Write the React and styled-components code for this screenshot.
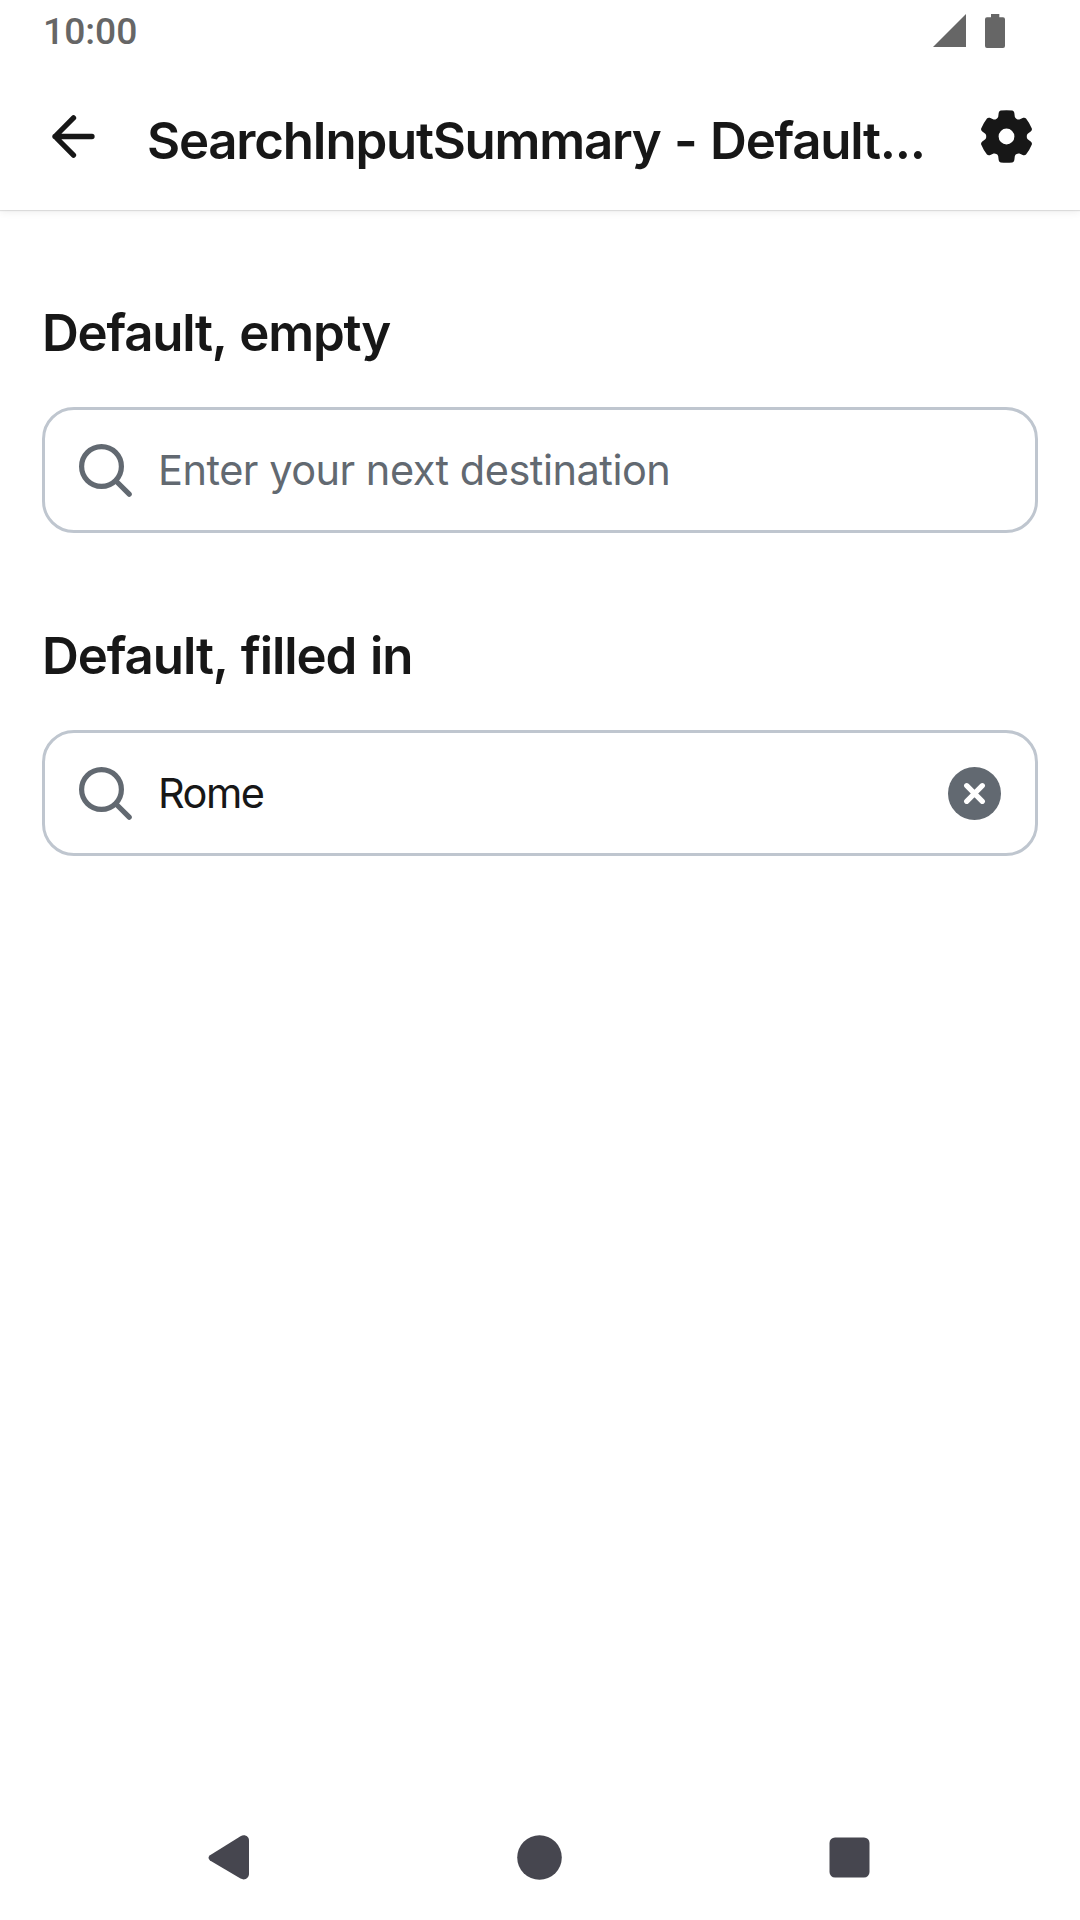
import React from "react";
import styled, { createGlobalStyle } from "styled-components";

const GlobalStyle = createGlobalStyle`
  *, *::before, *::after { box-sizing: border-box; }
  body { margin: 0; background: #fff; }
`;

const ink = "#171717";
const muted = "#626971";
const outline = "#bfc6cf";
const system = "#666666";
const navInk = "#46464f";

const Screen = styled.div`
  display: flex;
  flex-direction: column;
  width: 1080px;
  height: 1920px;
  background: #fff;
  color: ${ink};
  font-family: Inter, "Liberation Sans", sans-serif;
  svg { display: block; flex: none; }
`;

const TopBar = styled.header`
  flex: none;
  height: 210px;
  box-shadow: 0 1px 1px rgba(0, 0, 0, 0.1), 0 2px 8px rgba(0, 0, 0, 0.07);
`;

const StatusBar = styled.div`
  display: flex;
  align-items: center;
  justify-content: space-between;
  height: 61px;
  padding: 0 75px 0 43px;
`;

const Clock = styled.time`
  padding-top: 2px;
  font: 500 37.2px/59px Roboto, sans-serif;
  color: ${system};
`;

const StatusIcons = styled.div`
  display: flex;
  gap: 19px;
`;

const Toolbar = styled.div`
  display: flex;
  align-items: center;
  height: 149px;
  padding: 2px 47px 0 52px;
`;

const IconButton = styled.button`
  display: flex;
  border: 0;
  padding: 0;
  background: none;
  color: inherit;
`;

const Title = styled.h1`
  flex: 1;
  margin: 0 0 0 52px;
  padding-top: 8px;
  font-size: 51px;
  line-height: 64px;
  font-weight: 600;
  letter-spacing: ${(p) => p.$tracking}px;
  word-spacing: 2px;
  white-space: nowrap;
`;

const Content = styled.main`
  flex: 1;
  display: flex;
  flex-direction: column;
  gap: 90px;
  padding: 90px 42px 0;
`;

const Section = styled.section`
  display: flex;
  flex-direction: column;
  gap: 43px;
`;

const Heading = styled.h2`
  margin: 0;
  height: 64px;
  font-size: 51px;
  line-height: 66px;
  font-weight: 600;
  letter-spacing: ${(p) => p.$tracking}px;
  word-spacing: 2px;
  white-space: nowrap;
`;

const Field = styled.div`
  display: flex;
  align-items: center;
  height: 126px;
  padding: 0 34px;
  border: 3px solid ${outline};
  border-radius: 32px;
`;

const Value = styled.span`
  flex: 1;
  margin-left: 26px;
  font-size: 41.5px;
  font-weight: 400;
  line-height: 60px;
  letter-spacing: ${(p) => p.$tracking}px;
  color: ${(p) => (p.$placeholder ? muted : ink)};
  white-space: nowrap;
`;

const NavBar = styled.nav`
  display: flex;
  align-items: center;
  justify-content: space-between;
  height: 126px;
  padding: 0 210px 0 208px;
`;

const rotate = (x, y, deg) => {
  const a = (deg * Math.PI) / 180;
  const c = Math.cos(a);
  const s = Math.sin(a);
  return `${(x * c - y * s).toFixed(2)} ${(x * s + y * c).toFixed(2)}`;
};

// One gear tooth pointing up, repeated every 60 degrees.
const gearPath =
  [0, 60, 120, 180, 240, 300]
    .map((deg, i) => {
      const p = (x, y) => rotate(x, y, deg);
      return `${i ? "L" : "M"}${p(-10.15, -17.6)}Q${p(-8.7, -18.2)} ${p(-8.3, -19.7)}L${p(-7.8, -23.8)}Q${p(-7.4, -25.5)} ${p(-5.8, -25.9)}Q${p(0, -26.7)} ${p(5.8, -25.9)}Q${p(7.4, -25.5)} ${p(7.8, -23.8)}L${p(8.3, -19.7)}Q${p(8.7, -18.2)} ${p(10.15, -17.6)}`;
    })
    .join("") + "ZM-7.9 0A7.9 7.9 0 1 0 7.9 0A7.9 7.9 0 1 0 -7.9 0Z";

const GearIcon = () => (
  <svg width="53" height="53" viewBox="-26.5 -26.5 53 53">
    <path d={gearPath} fill={ink} fillRule="evenodd" />
  </svg>
);

const BackIcon = () => (
  <svg width="43" height="43" viewBox="0 0 43 43" fill="none" stroke={ink} strokeWidth="5.3" strokeLinecap="round" strokeLinejoin="round">
    <path d="M40 21.5H3M21.5 2.9L3 21.5L21.5 40.1" />
  </svg>
);

const SearchIcon = () => (
  <svg width="53" height="53" viewBox="0 0 53 53" fill="none" stroke={muted} strokeWidth="5.2">
    <circle cx="22.5" cy="22.5" r="19.9" />
    <path d="M37 37L50.2 50.2" strokeLinecap="round" />
  </svg>
);

const ClearIcon = () => (
  <svg width="53" height="53" viewBox="0 0 53 53">
    <circle cx="26.5" cy="26.5" r="26.5" fill={muted} />
    <path d="M18.7 18.7L34.3 34.3M34.3 18.7L18.7 34.3" stroke="#fff" strokeWidth="5.3" strokeLinecap="round" />
  </svg>
);

const SearchField = ({ value, placeholder, tracking }) => (
  <Field>
    <SearchIcon />
    <Value $placeholder={!value} $tracking={tracking}>{value || placeholder}</Value>
    {value && (
      <IconButton aria-label="Clear">
        <ClearIcon />
      </IconButton>
    )}
  </Field>
);

export default function App() {
  return (
    <Screen>
      <GlobalStyle />
      <TopBar>
        <StatusBar>
          <Clock>10:00</Clock>
          <StatusIcons>
            <svg width="33" height="34" viewBox="0 0 33 34" fill={system}>
              <path d="M33 0V33H0Z" />
            </svg>
            <svg width="20" height="34" viewBox="0 0 20 34" fill={system}>
              <path d="M6 0H14.3V3.3H18Q20 3.3 20 5.3V32Q20 34 18 34H2Q0 34 0 32V5.3Q0 3.3 2 3.3H6Z" />
            </svg>
          </StatusIcons>
        </StatusBar>
        <Toolbar>
          <IconButton aria-label="Back">
            <BackIcon />
          </IconButton>
          <Title $tracking={-1.26}>SearchInputSummary - Default...</Title>
          <IconButton aria-label="Settings">
            <GearIcon />
          </IconButton>
        </Toolbar>
      </TopBar>
      <Content>
        <Section>
          <Heading $tracking={-1.25}>Default, empty</Heading>
          <SearchField placeholder="Enter your next destination" tracking={-0.5} />
        </Section>
        <Section>
          <Heading $tracking={-1.1}>Default, filled in</Heading>
          <SearchField value="Rome" tracking={-1.5} />
        </Section>
      </Content>
      <NavBar>
        <svg width="42" height="46" viewBox="0 0 42 46" fill={navInk}>
          <path d="M2 21.2L32.5 2.2C36.5 -.2 41 2.2 41 6.4V39.8C41 44.4 36.5 46.8 32.5 44.6L2 26.4Q-1 23.8 2 21.2Z" />
        </svg>
        <svg width="45" height="45" viewBox="0 0 45 45" fill={navInk}>
          <circle cx="22.5" cy="22.5" r="22.3" />
        </svg>
        <svg width="41" height="41" viewBox="0 0 41 41" fill={navInk}>
          <rect x="0.5" y="0.5" width="40" height="40" rx="5.5" />
        </svg>
      </NavBar>
    </Screen>
  );
}
